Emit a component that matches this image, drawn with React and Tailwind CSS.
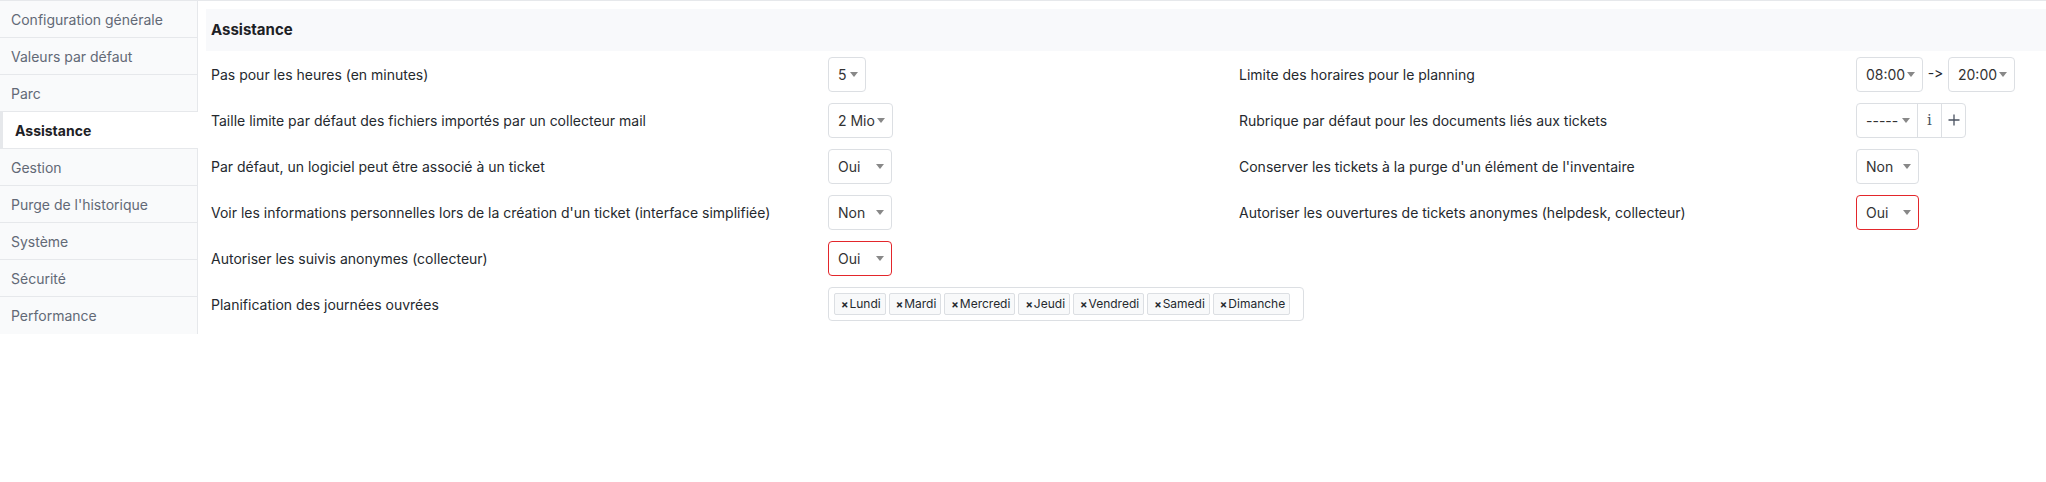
import React from 'react';

const menu = [
  'Configuration générale',
  'Valeurs par défaut',
  'Parc',
  'Assistance',
  'Gestion',
  "Purge de l'historique",
  'Système',
  'Sécurité',
  'Performance',
];

const days = ['Lundi', 'Mardi', 'Mercredi', 'Jeudi', 'Vendredi', 'Samedi', 'Dimanche'];

function Caret() {
  return <span className="w-0 h-0 border-x-[4px] border-x-transparent border-t-[5px] border-t-[#888] shrink-0" />;
}

function Select({ value, width, invalid, className = '' }) {
  return (
    <div
      className={`h-[35px] bg-white border rounded-[4px] flex items-center justify-between pl-[9px] pr-[7px] text-[14px] text-[#333] ${
        invalid ? 'border-[#e3262b]' : 'border-[#dcdfe3]'
      } ${className}`}
      style={{ width }}
    >
      <span>{value}</span>
      <Caret />
    </div>
  );
}

function Label({ children }) {
  return <div className="px-[5px] text-[14px] text-[#25292e]">{children}</div>;
}

export default function App() {
  return (
    <div className="w-[2046px] h-[482px] bg-white border-t border-[#e6e8eb] flex items-start" style={{ fontFamily: 'Inter, "Noto Sans", sans-serif' }}>
      {/* Sidebar */}
      <nav className="w-[198px] shrink-0 bg-[#f9fafb] border-r border-[#e6e8eb]">
        {menu.map((item, i) => {
          const active = item === 'Assistance';
          return (
            <div
              key={item}
              className={`h-[37px] flex items-center text-[14px] ${
                i < menu.length - 1 ? 'border-b border-[#e6e8eb]' : ''
              } ${
                active
                  ? 'bg-white border-l-[3px] border-l-[#e6e8eb] pl-[12px] font-bold text-[#1d2125] -mr-px'
                  : 'pl-[11px] text-[#626976]'
              }`}
            >
              {item}
            </div>
          );
        })}
      </nav>

      {/* Content */}
      <main className="flex-1 pl-[8px] pt-[8px]">
        <div className="h-[42px] bg-[#f8f9fb] flex items-center px-[5px] text-[15px] font-bold text-[#1d2125]">Assistance</div>

        <div className="grid grid-cols-[622px_406px_622px_1fr] auto-rows-[46px] items-center">
          <Label>Pas pour les heures (en minutes)</Label>
          <div><Select value="5" width={38} /></div>
          <Label>Limite des horaires pour le planning</Label>
          <div className="flex items-center">
            <Select value="08:00" width={67} />
            <span className="w-[25px] text-center text-[14px] text-[#25292e] -mt-[3px] [font-feature-settings:'calt'_0]">-&gt;</span>
            <Select value="20:00" width={67} />
          </div>

          <Label>Taille limite par défaut des fichiers importés par un collecteur mail</Label>
          <div><Select value="2 Mio" width={65} /></div>
          <Label>Rubrique par défaut pour les documents liés aux tickets</Label>
          <div className="flex items-center">
            <div className="h-[35px] flex border border-[#dcdfe3] rounded-[4px] bg-white text-[#333]">
              <div className="w-[60px] flex items-center justify-between pl-[9px] pr-[7px] text-[14px]">
                <span>-----</span>
                <Caret />
              </div>
              <div className="w-[24px] border-l border-[#dcdfe3] flex items-center justify-center text-[15px] text-[#4a5260]" style={{ fontFamily: '"DejaVu Serif", serif' }}>i</div>
              <div className="w-[24px] border-l border-[#dcdfe3] flex items-center justify-center text-[#4a5260]">
                <svg width="12" height="12" viewBox="0 0 12 12" stroke="currentColor" strokeWidth="1.3"><path d="M6 0.5v11M0.5 6h11" /></svg>
              </div>
            </div>
          </div>

          <Label>Par défaut, un logiciel peut être associé à un ticket</Label>
          <div><Select value="Oui" width={64} /></div>
          <Label>Conserver les tickets à la purge d'un élément de l'inventaire</Label>
          <div><Select value="Non" width={63} /></div>

          <Label>Voir les informations personnelles lors de la création d'un ticket (interface simplifiée)</Label>
          <div><Select value="Non" width={64} /></div>
          <Label>Autoriser les ouvertures de tickets anonymes (helpdesk, collecteur)</Label>
          <div><Select value="Oui" width={63} invalid /></div>

          <Label>Autoriser les suivis anonymes (collecteur)</Label>
          <div><Select value="Oui" width={64} invalid /></div>
          <div />
          <div />

          <Label>Planification des journées ouvrées</Label>
          <div>
            <div className="w-[476px] h-[34px] border border-[#dcdfe3] rounded-[4px] flex items-center gap-[3px] px-[5px] bg-white">
              {days.map((d) => (
                <span key={d} className="h-[22px] flex items-center pl-[6px] pr-[4px] bg-[#f8f9fa] border border-[#dcdfe3] rounded-[2px] text-[12px] text-[#25292e]">
                  <span className="font-bold text-[11px] mr-[1px]">×</span>
                  {d}
                </span>
              ))}
            </div>
          </div>
          <div />
          <div />
        </div>
      </main>
    </div>
  );
}
